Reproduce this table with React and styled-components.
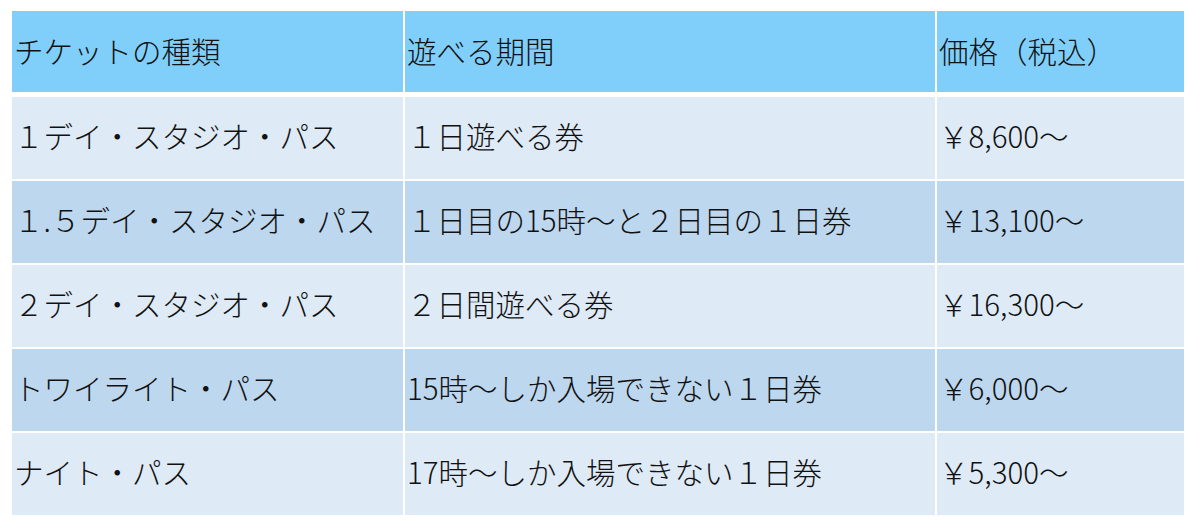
import React from 'react';
import styled, { createGlobalStyle } from 'styled-components';

const GlobalStyle = createGlobalStyle`
  html, body {
    margin: 0;
    padding: 0;
    background: #ffffff;
  }
  body {
    font-family: "Noto Sans CJK JP", "Noto Sans", sans-serif;
    color: #111;
  }
`;

const Page = styled.div`
  padding: 11px 16px 0 12px;
  width: 1172px;
`;

const Table = styled.div`
  display: flex;
  flex-direction: column;
  gap: 2px;
`;

const Row = styled.div`
  display: grid;
  grid-template-columns: 391px 530px 247px;
  column-gap: 2px;
  height: ${(p) => (p.$head ? '81px' : '82px')};
  margin-bottom: ${(p) => (p.$head ? '3px' : '0')};
`;

const Cell = styled.div`
  display: flex;
  align-items: center;
  box-sizing: border-box;
  padding-left: 2px;
  padding-bottom: ${(p) => (p.$head ? '1px' : '5px')};
  background: ${(p) => p.$bg};
  font-size: 29.5px;
  font-weight: 300;
  line-height: 1;
  white-space: nowrap;
  overflow: hidden;
`;

const HEAD_BG = '#80cffa';
const LIGHT = '#deeaf6';
const DARK = '#bdd7ee';

const header = ['チケットの種類', '遊べる期間', '価格（税込）'];

const rows = [
  ['１デイ・スタジオ・パス', '１日遊べる券', '￥8,600～'],
  ['１.５デイ・スタジオ・パス', '１日目の15時～と２日目の１日券', '￥13,100～'],
  ['２デイ・スタジオ・パス', '２日間遊べる券', '￥16,300～'],
  ['トワイライト・パス', '15時～しか入場できない１日券', '￥6,000～'],
  ['ナイト・パス', '17時～しか入場できない１日券', '￥5,300～'],
];

export default function App() {
  return (
    <>
      <GlobalStyle />
      <Page>
        <Table>
          <Row $head>
            {header.map((h) => (
              <Cell key={h} $head $bg={HEAD_BG}>
                {h}
              </Cell>
            ))}
          </Row>
          {rows.map((r, i) => (
            <Row key={r[0]}>
              {r.map((c) => (
                <Cell key={c} $bg={i % 2 === 0 ? LIGHT : DARK}>
                  {c}
                </Cell>
              ))}
            </Row>
          ))}
        </Table>
      </Page>
    </>
  );
}
